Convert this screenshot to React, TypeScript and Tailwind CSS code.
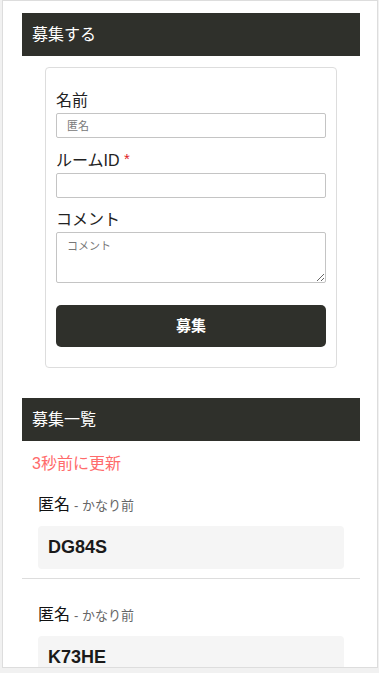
import React from "react";

const font = { fontFamily: '"Liberation Sans", "Noto Sans CJK JP", sans-serif' };

function Item({ id, first }: { id: string; first?: boolean }) {
  return (
    <div className={first ? "pt-[17px]" : "pt-[24px] border-t border-[#dddddd]"}>
      <div className="pl-[16px] pr-[16px]">
        <div className="h-[24px] leading-[24px] flex items-baseline">
          <span className="text-[16px] text-[#111]">匿名</span>
          <span className="text-[13px] text-[#666] ml-[4px]">- かなり前</span>
        </div>
        <div className="mt-[9px] h-[43px] bg-[#f5f5f5] rounded-[4px] pl-[10px] flex items-center">
          <span className="text-[18px] font-bold text-[#1a1a1a]">{id}</span>
        </div>
      </div>
      <div className="h-[9px]" />
    </div>
  );
}

export default function App() {
  return (
    <div className="w-[379px] h-[673px] bg-[#f1f1f1] overflow-hidden" style={font}>
      <div className="ml-[2px] w-[376px] h-[668px] bg-white border border-[#dddddd] overflow-hidden pl-[19px] pr-[17px] pt-[12px]">
        <div className="h-[43px] bg-[#2f302b] text-white text-[16px] pl-[10px] flex items-center">
          募集する
        </div>
        <div className="mt-[11px] mx-auto w-[292px] border border-[#dddddd] rounded-[4px] px-[10px] pt-[21px] pb-[20px]">
          <div className="h-[24px] leading-[24px] text-[16px] text-[#222]">名前</div>
          <input
            className="block w-[270px] h-[25px] border border-[#c4c4c4] rounded-[2px] px-[10px] text-[11px] placeholder:text-[#777] outline-none"
            placeholder="匿名"
            style={font}
          />
          <div className="mt-[11px] h-[24px] leading-[24px] text-[16px] text-[#222]">
            ルームID <span className="text-[#e0201e] text-[15px] align-top leading-[20px]">*</span>
          </div>
          <input
            className="block w-[270px] h-[25px] border border-[#c4c4c4] rounded-[2px] px-[10px] text-[11px] outline-none"
            style={font}
          />
          <div className="mt-[10px] h-[24px] leading-[24px] text-[16px] text-[#222]">コメント</div>
          <textarea
            className="block w-[270px] h-[51px] border border-[#c4c4c4] rounded-[2px] px-[10px] py-[5px] text-[11px] placeholder:text-[#777] outline-none"
            placeholder="コメント"
            style={font}
          />
          <button
            className="mt-[22px] w-[270px] h-[42px] bg-[#2f302b] rounded-[5px] text-white text-[15px] font-bold flex items-center justify-center"
            style={font}
          >
            募集
          </button>
        </div>
        <div className="mt-[30px] h-[43px] bg-[#2f302b] text-white text-[16px] pl-[10px] flex items-center">
          募集一覧
        </div>
        <div className="mt-[11px] pl-[10px] h-[24px] leading-[24px] text-[16px] text-[#ff6b6b]">3秒前に更新</div>
        <Item id="DG84S" first />
        <Item id="K73HE" />
      </div>
    </div>
  );
}
